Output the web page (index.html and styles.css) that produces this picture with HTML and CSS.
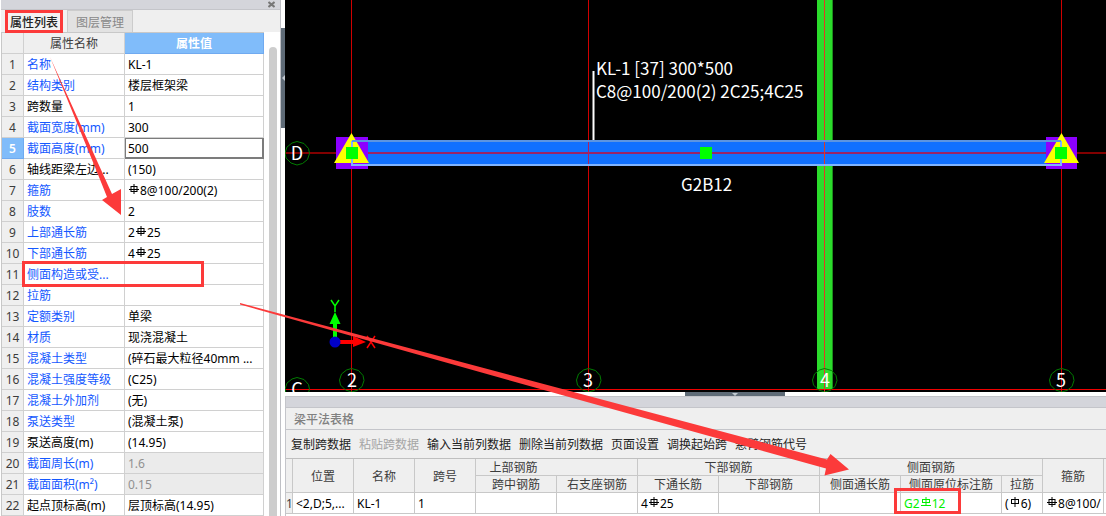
FILE: index.html
```html
<!DOCTYPE html>
<html lang="zh-CN">
<head>
<meta charset="utf-8">
<title>属性列表</title>
<link rel="stylesheet" href="styles.css">
</head>
<body>
<svg class="defs" aria-hidden="true">
  <symbol id="r3" viewBox="0 0 10 10"><path d="M5 0V10M2 2.500H8M0 5.500H10M2 7.500H8M2 2V8M8 2V8"/></symbol>
  <symbol id="r2" viewBox="0 0 10 10"><path d="M5 0V9M1 2.500H9M1 5.500H9M1.500 2V6M8.500 2V6M0 8.500H10"/></symbol>
  <symbol id="r1" viewBox="0 0 10 10"><path d="M5 0V10M1 2.500H9M1 6.500H9M1.500 2V7M8.500 2V7"/></symbol>
</svg>
<div class="app">
  <aside class="props">
    <div class="titlebar"><button class="close" aria-label="关闭"><svg viewBox="0 0 7 7"><path d="M.5 1l6 5M6.500 1l-6 5"/></svg></button></div>
    <nav class="tabs"><button class="tab active">属性列表</button><button class="tab">图层管理</button></nav>
    <div class="props-body">
      <table class="ptable">
        <colgroup><col class="c-no"><col class="c-name"><col></colgroup>
        <thead><tr><th></th><th>属性名称</th><th class="picked">属性值</th></tr></thead>
        <tbody>
          <tr><th>1</th><td class="link">名称</td><td>KL-1</td></tr>
          <tr><th>2</th><td class="link">结构类别</td><td>楼层框架梁</td></tr>
          <tr><th>3</th><td>跨数量</td><td>1</td></tr>
          <tr><th>4</th><td class="link">截面宽度(mm)</td><td>300</td></tr>
          <tr><th class="picked">5</th><td class="link">截面高度(mm)</td><td class="editing">500</td></tr>
          <tr><th>6</th><td>轴线距梁左边...</td><td>(150)</td></tr>
          <tr><th>7</th><td class="link">箍筋</td><td><svg class="rb"><use href="#r3"/></svg>8@100/200(2)</td></tr>
          <tr><th>8</th><td class="link">肢数</td><td>2</td></tr>
          <tr><th>9</th><td class="link">上部通长筋</td><td>2<svg class="rb"><use href="#r3"/></svg>25</td></tr>
          <tr><th>10</th><td class="link">下部通长筋</td><td>4<svg class="rb"><use href="#r3"/></svg>25</td></tr>
          <tr><th>11</th><td class="link">侧面构造或受...</td><td></td></tr>
          <tr><th>12</th><td class="link">拉筋</td><td></td></tr>
          <tr><th>13</th><td class="link">定额类别</td><td>单梁</td></tr>
          <tr><th>14</th><td class="link">材质</td><td>现浇混凝土</td></tr>
          <tr><th>15</th><td class="link">混凝土类型</td><td>(碎石最大粒径40mm ...</td></tr>
          <tr><th>16</th><td class="link">混凝土强度等级</td><td>(C25)</td></tr>
          <tr><th>17</th><td class="link">混凝土外加剂</td><td>(无)</td></tr>
          <tr><th>18</th><td class="link">泵送类型</td><td>(混凝土泵)</td></tr>
          <tr><th>19</th><td>泵送高度(m)</td><td>(14.95)</td></tr>
          <tr><th>20</th><td class="link">截面周长(m)</td><td class="locked">1.6</td></tr>
          <tr><th>21</th><td class="link">截面面积(m²)</td><td class="locked">0.15</td></tr>
          <tr><th>22</th><td>起点顶标高(m)</td><td>层顶标高(14.95)</td></tr>
        </tbody>
      </table>
      <div class="scroll"></div>
    </div>
  </aside>
  <button class="handle-v" aria-label="收起属性"><svg viewBox="0 0 4 100"><path d="M4 47v6L1 50z"/></svg></button>
  <main class="work">
    <svg class="canvas" viewBox="0 0 821 392" preserveAspectRatio="xMinYMin slice">
      <path class="axis" d="M66.500 0V392M303.500 0V392M776.500 0V392"/>
      <path class="axis bright" d="M0 389.500H821"/>
      <path class="axis dark" d="M0 153H821"/>
      <path fill="#2bdc2b" d="M532 0H547V389H532z"/>
      <path fill="#1d8f1d" d="M547 0H548V389H547z"/>
      <path fill="#8c00ff" d="M51 137H83V169H51zM761 137H792V169H761z"/>
      <path fill="#1070ff" d="M83 141H761V165H83z"/>
      <path stroke="#9a2468" stroke-width="2" d="M83 153H761"/>
      <path stroke="#b02060" d="M303.500 141V165"/>
      <path stroke="#e03a24" d="M539.500 0V392"/>
      <path fill="#ff0" d="M66.500 133L84 163H49zM776.500 133L794 163H759z"/>
      <path fill="none" stroke="#80b4ff" stroke-width="2" d="M67 141V165H776V141"/>
      <path stroke="#5c94e0" stroke-width="2" d="M67 141H776"/>
      <path fill="#0f0" d="M61 147H73V159H61zM415 147H427V159H415zM770 147H782V159H770z"/>
      <path fill="#fff" d="M307.500 71H309.500V140H307.500z"/>
      <g fill="none" stroke="#007d00">
        <path id="ring" d="M17 141.500l7 2 4.500 5 1 5-2 6-5 4-5.500 1.500-6-2-5-5-1-5 2-6 5-4z" transform="translate(-5)"/>
        <use href="#ring" x="54.500" y="227"/><use href="#ring" x="291.500" y="227"/><use href="#ring" x="527.500" y="227"/><use href="#ring" x="764.500" y="227"/><use href="#ring" y="236"/>
      </g>
      <g class="cad">
        <text x="311" y="75">KL-1 [37] 300*500</text>
        <text x="311" y="98">C8@100/200(2) 2C25;4C25</text>
        <text x="396" y="191">G2B12</text>
      </g>
      <g class="cad mark">
        <text x="12" y="160">D</text><text x="12" y="396">C</text>
        <text x="67" y="387">2</text><text x="303" y="387">3</text><text x="540" y="387">4</text><text x="776" y="387">5</text>
      </g>
      <path fill="#0f0" d="M48 338V324H44.500L50 312L55.500 324H52V338z"/>
      <path fill="red" d="M54 340H68V336L81 342L68 347V344H54z"/>
      <circle cx="50" cy="342" r="5.500" fill="#0000c8"/>
      <path class="ucs" stroke="#0f0" d="M46 300L50 306L54 300M50 306V312"/>
      <path class="ucs" stroke="red" d="M82 336L90 348M90 336L82 348"/>
    </svg>
    <button class="handle-h" aria-label="收起表格"><svg viewBox="0 0 100 4"><path d="M47 1h6L50 4z"/></svg></button>
    <section class="beam">
      <div class="strip"></div>
      <h2>梁平法表格</h2>
      <div class="tools"><button>复制跨数据</button><button disabled>粘贴跨数据</button><button>输入当前列数据</button><button>删除当前列数据</button><button>页面设置</button><button>调换起始跨</button><button>悬臂钢筋代号</button></div>
      <div class="beam-scroll">
      <table class="btable">
        <colgroup><col class="w7"><col class="w61"><col class="w61"><col class="w61"><col class="w81"><col class="w81"><col class="w81"><col class="w101"><col class="w81"><col class="w101"><col class="w41"><col class="w61"><col class="w61"></colgroup>
        <thead>
          <tr><th rowspan="2"></th><th rowspan="2">位置</th><th rowspan="2">名称</th><th rowspan="2">跨号</th><th colspan="2" class="top-bars">上部钢筋</th><th colspan="2">下部钢筋</th><th colspan="3">侧面钢筋</th><th rowspan="2">箍筋</th><th rowspan="2"></th></tr>
          <tr><th>跨中钢筋</th><th>右支座钢筋</th><th>下通长筋</th><th>下部钢筋</th><th>侧面通长筋</th><th>侧面原位标注筋</th><th>拉筋</th></tr>
        </thead>
        <tbody><tr><th>1</th><td>&lt;2,D;5,...</td><td>KL-1</td><td>1</td><td></td><td></td><td>4<svg class="rb"><use href="#r3"/></svg>25</td><td></td><td></td><td class="fresh">G2<svg class="rb"><use href="#r2"/></svg>12</td><td>(<svg class="rb"><use href="#r1"/></svg>6)</td><td><svg class="rb"><use href="#r3"/></svg>8@100/</td><td></td></tr></tbody>
      </table>
      </div>
    </section>
  </main>
  <svg class="notes" aria-hidden="true">
    <path d="M50 57L112 194L121 189L121 215L102 200L107 197L97 172z"/>
    <path d="M240 303L827 459.500L830.500 454L849 469.500L824.500 475.500L826 468.500L560 394.500L240 304.500z"/>
    <g><rect x="6.500" y="11.500" width="55" height="20"/><rect x="23.500" y="262.500" width="179" height="23"/><rect x="895.500" y="489.500" width="64" height="23"/></g>
  </svg>
</div>
</body>
</html>
```
FILE: styles.css
```css
* { box-sizing: border-box; }
body { margin: 0; font: 12px/18px "Noto Sans", "Noto Sans CJK SC", sans-serif; color: #000; background: #fff; overflow: hidden; }
button { font: inherit; color: inherit; border: 0; padding: 0; background: none; }
svg { display: block; }
table { border-collapse: separate; border-spacing: 0; table-layout: fixed; }
th, td { padding: 0; font-weight: 400; white-space: nowrap; overflow: hidden; }
th { color: #3c3c3c; }
.defs { position: absolute; width: 0; height: 0; }
.app { position: relative; display: flex; min-height: 100vh; }
.props { width: 281px; flex: none; padding-left: 1px; border-right: 1px solid #bfc0c5; display: flex; flex-direction: column; }
.titlebar { height: 10px; background: #d4d5db; border-bottom: 1px solid #c4c5ca; display: flex; justify-content: flex-end; align-items: center; padding-right: 5px; }
.close svg { width: 7px; height: 7px; fill: none; stroke: #777; stroke-width: 2; }
.tabs { display: flex; height: 22px; background: #efefef; }
.tab { padding: 2px 8px 0; line-height: 18px; color: #888; background: #e2e2e2; border: 1px solid #ccc; border-bottom: 0; }
.tab.active { color: #222; background: #f2f2f2; border-color: #f2f2f2; font-weight: 500; }
.props-body { display: flex; flex: 1; background: #fff; }
.ptable { width: 263px; border-top: 1px solid #c8c8c8; border-left: 1px solid #c8c8c8; align-self: flex-start; }
.c-no { width: 22px; }
.c-name { width: 101px; }
.ptable th, .ptable td { height: 21px; line-height: 18px; padding-top: 2px; border-right: 1px solid #d0d0d0; border-bottom: 1px solid #d0d0d0; }
.ptable th { background: #efefef; }
.ptable td { padding-left: 3px; }
.ptable th.picked { background: #80bcfa; color: #fff; font-weight: 600; border-color: #70aaf0; }
.ptable td.editing { box-shadow: inset 1px 1px 0 #7c7c7c, inset -1px -1px 0 #7c7c7c; border-color: #7c7c7c; }
.ptable .link { color: #1458ff; }
.ptable td.locked { background: #ebebeb; color: #919191; }
.scroll { width: 8px; margin: 15px 0 0 5px; border-radius: 4px 4px 0 0; background: #cdcdcd; }
.handle-v { width: 4px; height: 100px; margin-top: 28px; background: #5f6b77; flex: none; }
.handle-v svg, .handle-h svg { width: 100%; height: 100%; fill: #c3cad1; }
.work { flex: 1; min-width: 0; display: flex; flex-direction: column; }
.canvas { flex: 1 1 0; width: 100%; min-height: 0; background: #000; }
.axis { fill: none; stroke: #d00000; }
.axis.bright { stroke: #f00000; }
.axis.dark { stroke: #820000; stroke-width: 2; }
.ucs { fill: none; stroke-width: 1.5; }
.cad { fill: #fff; font: 400 17px "Noto Sans CJK SC", sans-serif; }
.mark { text-anchor: middle; font-size: 18px; }
.handle-h { width: 100px; height: 4px; margin-left: 400px; background: #5f6b77; }
.beam { background: #efefef; border-left: 1px solid #c4c5ca; border-top: 1px solid #c4c5ca; }
.strip { height: 11px; background: #d4d5db; border-bottom: 1px solid #c4c5ca; }
h2 { margin: 0; height: 22px; padding: 0 8px; font-size: 12px; line-height: 23px; font-weight: 500; color: #808080; border-bottom: 1px solid #c4c5ca; }
.tools { display: flex; gap: 8px; height: 28px; padding: 2px 5px 0; white-space: nowrap; color: #222; }
.tools button:disabled { color: #a5a5a5; }
.beam-scroll { overflow: hidden; background: #fff; padding-bottom: 2px; }
.btable { width: 879px; border-top: 1px solid #bfbfbf; }
.btable th, .btable td { border-right: 1px solid #c8c8c8; border-bottom: 1px solid #c8c8c8; }
.btable th { height: 17px; line-height: 14px; padding-top: 2px; background: #efefef; }
.btable tbody th, .btable td { height: 21px; line-height: 18px; padding-top: 2px; }
.btable td { padding-left: 3px; }
.btable th.top-bars { padding-right: 86px; }
.fresh { color: #00f000; }
.w7 { width: 7px; } .w41 { width: 41px; } .w61 { width: 61px; } .w81 { width: 81px; } .w101 { width: 101px; }
.rb { display: inline-block; width: 10px; height: 10px; margin: 0 1px; vertical-align: 1px; fill: none; stroke: currentColor; }
.notes { position: absolute; inset: 0; width: 100%; height: 100%; pointer-events: none; fill: #fc3a3a; }
.notes g { fill: none; stroke: #fc3a3a; stroke-width: 3; }
```
